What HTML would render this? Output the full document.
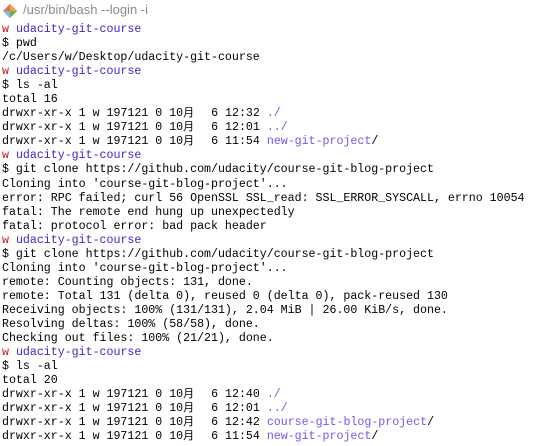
<!DOCTYPE html><html><head><style>
body{margin:0;background:#fff;width:537px;height:446px;overflow:hidden;position:relative}
.t{position:absolute;left:23px;top:2px;font:13px "Liberation Sans",sans-serif;color:#8a8a8a}
pre{position:absolute;left:2px;top:23px;margin:0;font:11.62px/14.05px "Liberation Mono","Noto Sans CJK SC",monospace;color:#000}
.r{color:#d01010}.p{color:#3a28c8}.d{color:#6a5cf0}
.m{display:inline-block;width:14px;font-family:"Noto Sans CJK SC",sans-serif;font-size:11px;line-height:11px}
</style></head><body>
<svg style="position:absolute;left:2px;top:3px" width="16" height="16" viewBox="0 0 16 16">
<path d="M8 1L15 8L8 15L1 8Z" fill="#f14e32" opacity=".85"/><path d="M8 1L15 8L8 8Z" fill="#e8a838"/><path d="M1 8L8 15L8 8Z" fill="#7ab9e8"/><path d="M15 8L8 15L8 8Z" fill="#67b35b"/></svg>
<div class="t">/usr/bin/bash --login -i</div>
<pre><span class="r">w</span> <span class="p">udacity-git-course</span>
$ pwd
/c/Users/w/Desktop/udacity-git-course
<span class="r">w</span> <span class="p">udacity-git-course</span>
$ ls -al
total 16
drwxr-xr-x 1 w 197121 0 10<span class="m">月</span>  6 12:32 <span class="d">./</span>
drwxr-xr-x 1 w 197121 0 10<span class="m">月</span>  6 12:01 <span class="d">../</span>
drwxr-xr-x 1 w 197121 0 10<span class="m">月</span>  6 11:54 <span class="d">new-git-project</span>/
<span class="r">w</span> <span class="p">udacity-git-course</span>
$ git clone https://github.com/udacity/course-git-blog-project
Cloning into 'course-git-blog-project'...
error: RPC failed; curl 56 OpenSSL SSL_read: SSL_ERROR_SYSCALL, errno 10054
fatal: The remote end hung up unexpectedly
fatal: protocol error: bad pack header
<span class="r">w</span> <span class="p">udacity-git-course</span>
$ git clone https://github.com/udacity/course-git-blog-project
Cloning into 'course-git-blog-project'...
remote: Counting objects: 131, done.
remote: Total 131 (delta 0), reused 0 (delta 0), pack-reused 130
Receiving objects: 100% (131/131), 2.04 MiB | 26.00 KiB/s, done.
Resolving deltas: 100% (58/58), done.
Checking out files: 100% (21/21), done.
<span class="r">w</span> <span class="p">udacity-git-course</span>
$ ls -al
total 20
drwxr-xr-x 1 w 197121 0 10<span class="m">月</span>  6 12:40 <span class="d">./</span>
drwxr-xr-x 1 w 197121 0 10<span class="m">月</span>  6 12:01 <span class="d">../</span>
drwxr-xr-x 1 w 197121 0 10<span class="m">月</span>  6 12:42 <span class="d">course-git-blog-project</span>/
drwxr-xr-x 1 w 197121 0 10<span class="m">月</span>  6 11:54 <span class="d">new-git-project</span>/</pre>
</body></html>
